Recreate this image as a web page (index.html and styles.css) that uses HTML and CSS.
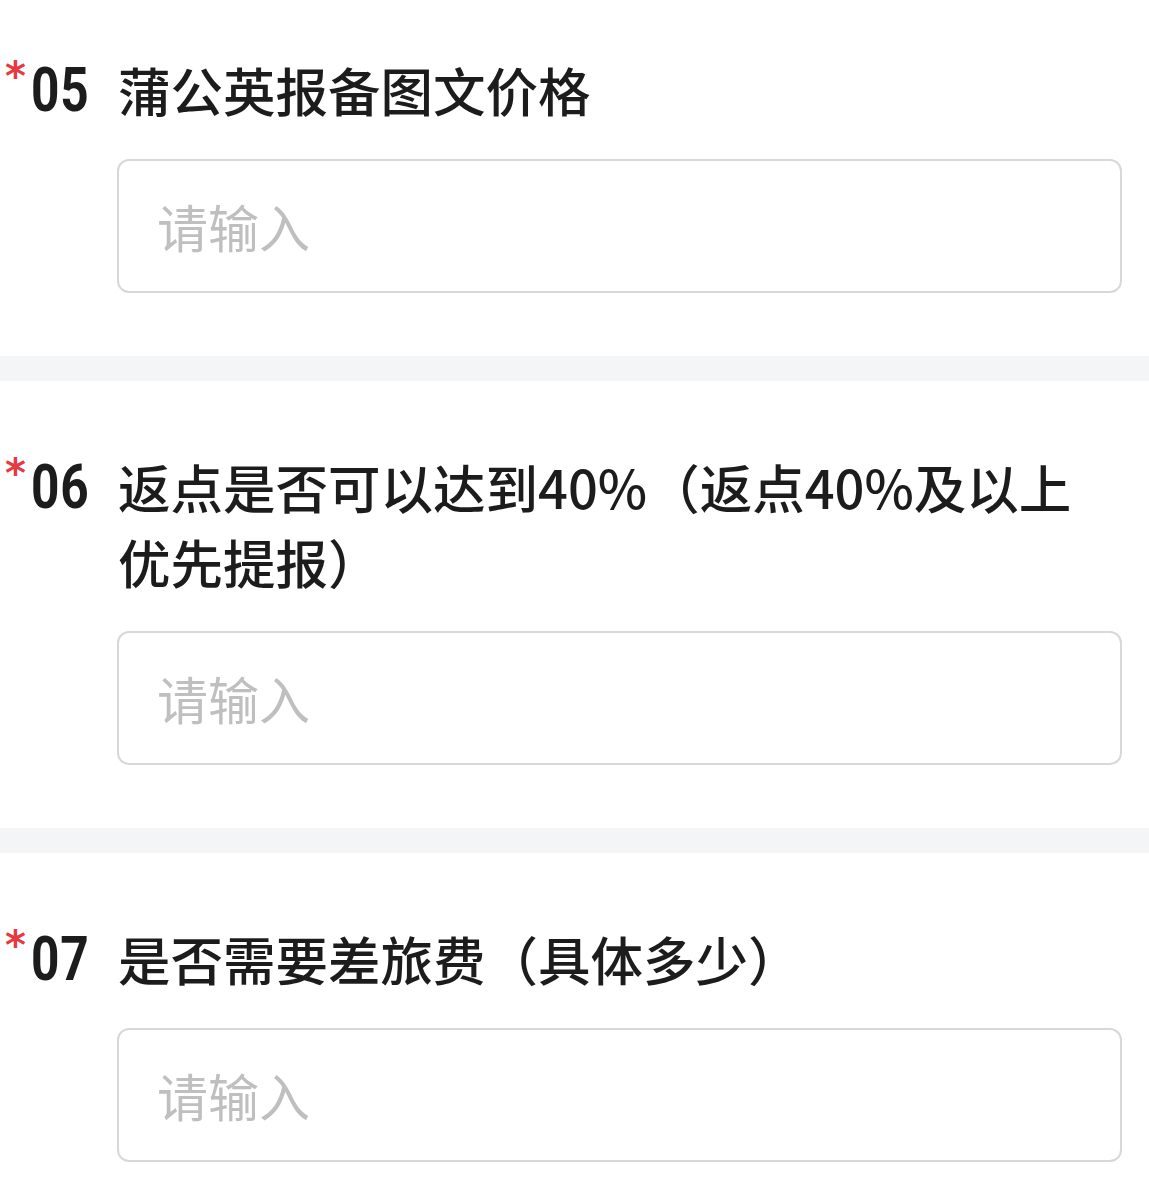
FILE: index.html
```html
<!DOCTYPE html>
<html lang="zh-CN">
<head>
  <meta charset="utf-8">
  <title>报名信息</title>
  <link rel="stylesheet" href="styles.css">
</head>
<body>

<div class="form">
  <div class="question first">
    <div class="q-head">
      <div class="q-mark"><span class="req">*</span><span class="q-no">05</span></div>
      <div class="q-text">蒲公英报备图文价格</div>
    </div>
    <input class="q-input" type="text" placeholder="请输入">
  </div>

  <div class="divider"></div>

  <div class="question">
    <div class="q-head">
      <div class="q-mark"><span class="req">*</span><span class="q-no">06</span></div>
      <div class="q-text">返点是否可以达到40%（返点40%及以上优先提报）</div>
    </div>
    <input class="q-input" type="text" placeholder="请输入">
  </div>

  <div class="divider"></div>

  <div class="question">
    <div class="q-head">
      <div class="q-mark"><span class="req">*</span><span class="q-no">07</span></div>
      <div class="q-text">是否需要差旅费（具体多少）</div>
    </div>
    <input class="q-input" type="text" placeholder="请输入">
  </div>
</div>

</body>
</html>
```

FILE: styles.css
```css
html, body {
  margin: 0;
  padding: 0;
  background: #fff;
  color: #1c1c1c;
  font-family: "Noto Sans CJK SC", "Noto Sans", sans-serif;
}
body { overflow: hidden; }

.question {
  padding: 68px 27px 63px 0;
}
.question.first { padding-top: 52px; }

.divider {
  height: 25px;
  background: #f4f5f7;
}

/* title row: marker column + wrapping text */
.q-head {
  display: flex;
  align-items: flex-start;
}
.q-mark {
  width: 118px;
  flex: none;
  display: flex;
  align-items: flex-start;
  height: 75px;
}
.req {
  width: 22px;
  margin-left: 5px;
  color: #e53a3f;
  font-family: "DejaVu Sans", sans-serif;
  font-weight: bold;
  font-size: 40px;
  line-height: 1;
  margin-top: 4px;
}
.q-no {
  display: inline-block;
  font-family: Roboto, sans-serif;
  font-weight: 700;
  font-size: 62px;
  line-height: 75px;
  letter-spacing: 1px;
  transform: scaleX(0.8);
  transform-origin: left center;
  margin-left: 4px;
}
.q-text {
  flex: 1;
  font-size: 52.5px;
  font-weight: 500;
  line-height: 75px;
  padding-right: 20px;
}

.q-input {
  display: block;
  box-sizing: border-box;
  width: calc(100% - 117px);
  height: 134px;
  margin: 32px 0 0 117px;
  padding: 0 38px;
  border: 2px solid #d8d8d8;
  border-radius: 12px;
  background: #fff;
  font-family: "Noto Sans CJK SC", sans-serif;
  font-size: 51px;
  color: #1c1c1c;
  outline: none;
}
.q-input::placeholder { color: #bfbfbf; }
```
